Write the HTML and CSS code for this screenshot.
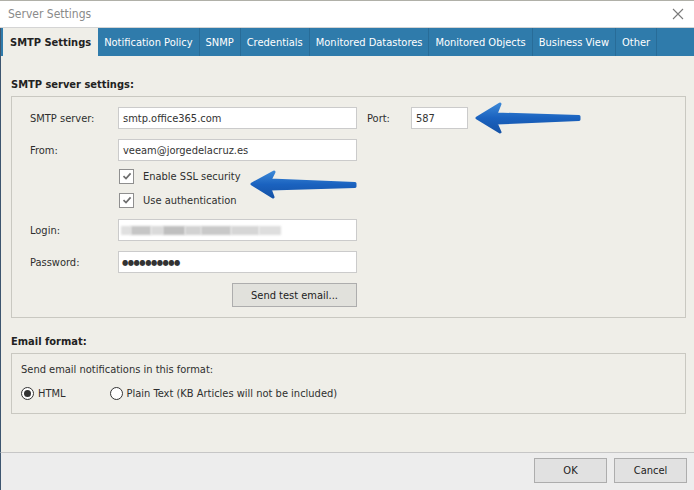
FILE: index.html
```html
<!DOCTYPE html>
<html>
<head>
<meta charset="utf-8">
<link rel="stylesheet" href="styles.css">
</head>
<body>
<div class="window">
  <div class="titlebar">
    <span class="title">Server Settings</span>
    <svg class="close" width="12" height="12" viewBox="0 0 12 12"><path d="M1 1L11 11M11 1L1 11" stroke="#7a7a7a" stroke-width="1.1"/></svg>
  </div>
  <div class="tabs">
    <div class="tab active">SMTP Settings</div>
    <div class="tab">Notification Policy</div>
    <div class="tab">SNMP</div>
    <div class="tab">Credentials</div>
    <div class="tab">Monitored Datastores</div>
    <div class="tab">Monitored Objects</div>
    <div class="tab">Business View</div>
    <div class="tab">Other</div>
  </div>
  <div class="content">
    <div class="section-title">SMTP server settings:</div>
    <div class="group smtp">
      <div class="row r1">
        <span class="label">SMTP server:</span>
        <div class="input wide">smtp.office365.com</div>
        <span class="label port-label">Port:</span>
        <div class="input port">587</div>
      </div>
      <div class="row r2">
        <span class="label">From:</span>
        <div class="input wide">veeam@jorgedelacruz.es</div>
      </div>
      <div class="row check-row c1">
        <span class="label"></span>
        <span class="checkbox"><svg width="10" height="10" viewBox="0 0 10 10"><path d="M1.5 5.2L4 7.6L8.6 2.4" fill="none" stroke="#6e6e6e" stroke-width="1.7"/></svg></span>
        <span class="check-text">Enable SSL security</span>
      </div>
      <div class="row check-row c2">
        <span class="label"></span>
        <span class="checkbox"><svg width="10" height="10" viewBox="0 0 10 10"><path d="M1.5 5.2L4 7.6L8.6 2.4" fill="none" stroke="#6e6e6e" stroke-width="1.7"/></svg></span>
        <span class="check-text">Use authentication</span>
      </div>
      <div class="row r3">
        <span class="label">Login:</span>
        <div class="input wide blurred">
          <span class="bl b1"></span><span class="bl b2"></span><span class="bl b3"></span><span class="bl b4"></span><span class="bl b5"></span><span class="bl b6"></span><span class="bl b7"></span><span class="bl b8"></span>
        </div>
      </div>
      <div class="row r4">
        <span class="label">Password:</span>
        <div class="input wide dots">●●●●●●●●●●</div>
      </div>
      <div class="row r5">
        <span class="label"></span>
        <div class="spacer"></div>
        <div class="button test">Send test email...</div>
      </div>
    </div>
    <div class="section-title second">Email format:</div>
    <div class="group format">
      <div class="format-text">Send email notifications in this format:</div>
      <div class="radios">
        <span class="radio checked"></span><span class="radio-text html">HTML</span>
        <span class="radio"></span><span class="radio-text">Plain Text (KB Articles will not be included)</span>
      </div>
    </div>
  </div>
  <div class="footer">
    <div class="button dlg">OK</div>
    <div class="button dlg">Cancel</div>
  </div>
  <svg class="arrows" width="694" height="490" viewBox="0 0 694 490">
    <defs>
      <linearGradient id="ag" x1="0" y1="0" x2="0" y2="1">
        <stop offset="0" stop-color="#3a86d6"/>
        <stop offset="0.5" stop-color="#1a62bf"/>
        <stop offset="1" stop-color="#1553a8"/>
      </linearGradient>
    </defs>
    <polygon points="477,118 500,104 496,114 579,116.5 579,119.5 496,123 500,132" fill="url(#ag)" stroke="url(#ag)" stroke-width="3" stroke-linejoin="round"/>
    <polygon points="252,184 274,172 270,180 355,183.5 355,186.5 270,189 273,197" fill="url(#ag)" stroke="url(#ag)" stroke-width="3" stroke-linejoin="round"/>
  </svg>
</div>
</body>
</html>
```
FILE: styles.css
```css
* { box-sizing: border-box; }
html, body { margin: 0; padding: 0; }
body {
  width: 694px;
  height: 490px;
  overflow: hidden;
  font-family: "DejaVu Sans Condensed", "DejaVu Sans", sans-serif;
  font-size: 11px;
  color: #2e2e2e;
  background: #efeee8;
}
.window {
  position: relative;
  width: 694px;
  height: 490px;
  display: flex;
  flex-direction: column;
  border-top: 1px solid #b0b0a8;
}
.titlebar {
  height: 27px;
  background: #fff;
  display: flex;
  align-items: center;
  justify-content: space-between;
  padding: 0 10px 0 8px;
  border-bottom: 1px solid #d4d4d4;
  flex: none;
}
.title { color: #8a8a8a; font-size: 12px; }
.body-area {
  display: flex;
}
.tabs {
  height: 28px;
  background: #2f7bab;
  display: flex;
  padding-left: 2px;
  flex: none;
  border-left: 1px solid #3d5670;
}
.tab {
  color: #fff;
  padding: 0 6px;
  display: flex;
  align-items: center;
  border-right: 1px solid #286c98;
  font-size: 11px;
}
.tab.active {
  background: #efeee8;
  color: #222;
  font-weight: bold;
  border-right: none;
  padding: 0 7px;
}
.content {
  flex: 1;
  padding: 0 8px 0 10px;
  border-left: 1px solid #3d5670;
}
.section-title {
  font-weight: bold;
  color: #222;
  margin-top: 21px;
  height: 15px;
  line-height: 15px;
}
.section-title.second { margin-top: 16px; }
.group {
  border: 1px solid #c9c8c1;
  margin-top: 4px;
}
.smtp { padding: 10px 0 9px 18px; height: 222px; }
.row { display: flex; align-items: center; height: 22px; }
.r2 { margin-top: 10px; }
.c1 { margin-top: 4px; }
.c2 { margin-top: 2px; }
.r3 { margin-top: 8px; }
.r4 { margin-top: 10px; }
.r5 { margin-top: 10px; height: 24px; }
.label { width: 88px; flex: none; }
.input {
  height: 22px;
  background: #fff;
  border: 1px solid #cbcbcb;
  padding-left: 4px;
  display: flex;
  align-items: center;
  color: #333;
}
.wide { width: 239px; }
.port-label { width: 44px; margin-left: 10px; }
.port { width: 57px; }
.checkbox {
  width: 15px;
  height: 15px;
  border: 1px solid #8f8f8f;
  background: #fff;
  display: flex;
  align-items: center;
  justify-content: center;
  margin-left: 1px;
}
.check-text { margin-left: 9px; }
.blurred { gap: 0; padding-left: 2px; }
.bl { height: 9px; background: #c8c8c8; filter: blur(1.2px); display: block; }
.b1 { width: 10px; background: #e0e0e0; }
.b2 { width: 20px; background: #c6c6c6; }
.b3 { width: 12px; background: #dadada; }
.b4 { width: 22px; background: #bfbfbf; }
.b5 { width: 16px; background: #d2d2d2; }
.b6 { width: 30px; background: #c9c9c9; }
.b7 { width: 28px; background: #d6d6d6; }
.b8 { width: 22px; background: #dedede; }
.dots { font-size: 8px; letter-spacing: -0.5px; color: #333; padding-left: 3px; }
.spacer { width: 114px; flex: none; }
.button {
  background: #e1e1dc;
  border: 1px solid #adadad;
  display: flex;
  align-items: center;
  justify-content: center;
  color: #222;
}
.test { width: 125px; height: 24px; }
.format { padding: 9px 0 0 9px; height: 61px; }
.format-text { height: 14px; line-height: 14px; }
.radios { display: flex; align-items: center; margin-top: 10px; }
.radio {
  width: 13px;
  height: 13px;
  border-radius: 50%;
  border: 1px solid #333;
  background: #fff;
  position: relative;
  flex: none;
}
.radio.checked::after {
  content: "";
  position: absolute;
  left: 2px;
  top: 2px;
  width: 7px;
  height: 7px;
  border-radius: 50%;
  background: #333;
}
.radio-text { margin-left: 4px; }
.radio-text.html { margin-right: 44px; }
.footer {
  height: 38px;
  flex: none;
  background: #ededed;
  border-top: 1px solid #c6c6c6;
  border-left: 1px solid #3d5670;
  display: flex;
  justify-content: flex-end;
  align-items: flex-start;
  gap: 7px;
  padding: 5px 7px 0 0;
}
.dlg { width: 73px; height: 25px; background: #e1e1e1; }
.arrows { position: absolute; left: 0; top: -1px; pointer-events: none; }
```
